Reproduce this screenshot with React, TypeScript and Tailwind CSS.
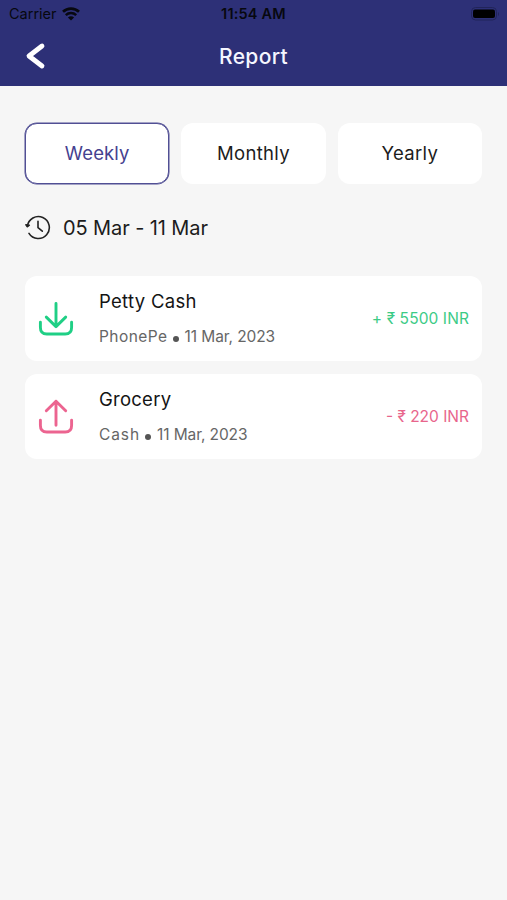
import clsx from "clsx";

type Transaction = {
  title: string;
  titleClass: string;
  method: string;
  methodClass: string;
  date: string;
  amount: string;
  amountClass: string;
  type: "income" | "expense";
};

const tabs = [
  { label: "Weekly", className: "tracking-[0.1px]" },
  { label: "Monthly", className: "tracking-[0.3px]" },
  { label: "Yearly", className: "tracking-[0.3px]" },
];

const transactions: Transaction[] = [
  {
    title: "Petty Cash",
    titleClass: "tracking-[0.3px]",
    method: "PhonePe",
    methodClass: "tracking-[0.45px]",
    date: "11 Mar, 2023",
    amount: "+ ₹ 5500 INR",
    amountClass: "tracking-[0.1px]",
    type: "income",
  },
  {
    title: "Grocery",
    titleClass: "tracking-[0.25px]",
    method: "Cash",
    methodClass: "tracking-[0.9px]",
    date: "11 Mar, 2023",
    amount: "- ₹ 220 INR",
    amountClass: "tracking-[0px]",
    type: "expense",
  },
];

const WifiIcon = () => (
  <svg width="18" height="14" viewBox="0 0 18 14" fill="none" stroke="#07080f">
    <path d="M1 4.8C5.4 0.6 12.6 0.6 17 4.8" strokeWidth="2.7" />
    <path d="M3.8 8.2C6.8 5.4 11.2 5.4 14.2 8.2" strokeWidth="2.5" />
    <path d="M9 13.6L5.9 10.4C7.7 8.9 10.3 8.9 12.1 10.4Z" fill="#07080f" stroke="none" />
  </svg>
);

const BatteryIcon = () => (
  <svg width="30" height="16" viewBox="0 0 30 16" fill="none">
    <rect x="1.5" y="1.5" width="25" height="12.5" rx="4" stroke="#21245a" />
    <rect x="3" y="3.5" width="22" height="8.5" rx="2" fill="#000" />
    <path d="M28 6V10C29.3 9.5 29.3 6.5 28 6Z" fill="#21245a" />
  </svg>
);

const HistoryIcon = () => (
  <svg
    width="26"
    height="26"
    viewBox="0 0 26 26"
    fill="none"
    stroke="#222"
    strokeWidth="1.6"
    strokeLinecap="round"
    strokeLinejoin="round"
  >
    <path d="M2.4 11.2A11 11 0 1 1 4 18.4" />
    <path d="M0.9 9.8L2.4 11.7L4.3 10.2Z" fill="#222" />
    <path d="M13 6.3V12.7L17.3 16.2" />
  </svg>
);

const TransferIcon = ({ type }: { type: Transaction["type"] }) => (
  <svg
    width="36"
    height="36"
    viewBox="0 0 36 36"
    fill="none"
    stroke={type === "income" ? "#1fcf85" : "#ec6490"}
    strokeWidth="2.9"
    strokeLinecap="round"
    strokeLinejoin="round"
  >
    <path d="M2.4 21.3V26.5C2.4 30.7 4.8 33 8.8 33H27.2C31.2 33 33.6 30.7 33.6 26.5V21.3" />
    {type === "income" ? (
      <path d="M18 2.4V25.6M8.3 16.1L18 25.6L27.7 16.1" />
    ) : (
      <path d="M18 26.2V2.2M8.3 11.7L18 2.2L27.7 11.7" />
    )}
  </svg>
);

const TransactionCard = ({ item }: { item: Transaction }) => (
  <div className="flex h-[85px] items-center rounded-xl bg-white pr-[13px] pl-[13px]">
    <TransferIcon type={item.type} />
    <div className="ml-[25px] flex-1">
      <h2 className={clsx("text-[18.5px] leading-6 text-[#141414]", item.titleClass)}>
        {item.title}
      </h2>
      <div className="mt-3 flex items-center text-[15.5px] leading-6 text-[#666]">
        <span className={item.methodClass}>{item.method}</span>
        <span className="mr-1.5 ml-[5px] mt-1 size-1.5 rounded-full bg-[#555]" />
        <span className="tracking-[-0.1px]">{item.date}</span>
      </div>
    </div>
    <span
      className={clsx(
        "text-[15.5px]",
        item.amountClass,
        item.type === "income" ? "text-[#3ccb86]" : "text-[#e8658c]",
      )}
    >
      {item.amount}
    </span>
  </div>
);

export default function App() {
  return (
    <div className="min-h-screen bg-[#f6f6f6] font-['Inter',sans-serif]">
      <header className="h-[86px] bg-[#2d3077]">
        <div className="grid h-7 grid-cols-3 items-center px-[7px] text-[#07080f]">
          <div className="flex items-center gap-[5px] pl-0.5 text-[14.5px] leading-5">
            Carrier <WifiIcon />
          </div>
          <span className="pb-px text-center text-[14.5px] leading-5 font-semibold tracking-[0.2px]">
            11:54 AM
          </span>
          <div className="flex justify-end">
            <BatteryIcon />
          </div>
        </div>
        <div className="grid h-14 grid-cols-3 items-center px-[25px]">
          <svg width="22" height="28" viewBox="0 0 22 28" fill="none">
            <path
              d="M17 4L4 14L17 24"
              stroke="#fff"
              strokeWidth="4.8"
              strokeLinecap="round"
              strokeLinejoin="round"
            />
          </svg>
          <h1 className="pt-0.5 text-center text-[21px] font-medium tracking-[0.3px] text-[#f5f6ff]">
            Report
          </h1>
        </div>
      </header>

      <main className="px-[25px] pt-[37px]">
        <div className="grid grid-cols-3 gap-3">
          {tabs.map((tab, index) => (
            <button
              key={tab.label}
              className={clsx(
                "h-[61px] rounded-xl bg-white pt-px text-[18.5px]",
                tab.className,
                index === 0
                  ? "border border-[#514f94] text-[#45418f] shadow-[0_0_0_0.5px_#514f94]"
                  : "text-[#1c1c1c]",
              )}
            >
              {tab.label}
            </button>
          ))}
        </div>

        <div className="mt-7 flex h-8 items-center gap-3 text-[20px] tracking-[-0.1px] text-[#1c1c1c]">
          <HistoryIcon />
          <span>05 Mar - 11 Mar</span>
        </div>

        <div className="mt-8 flex flex-col gap-[13px]">
          {transactions.map((item) => (
            <TransactionCard key={item.title} item={item} />
          ))}
        </div>
      </main>
    </div>
  );
}
